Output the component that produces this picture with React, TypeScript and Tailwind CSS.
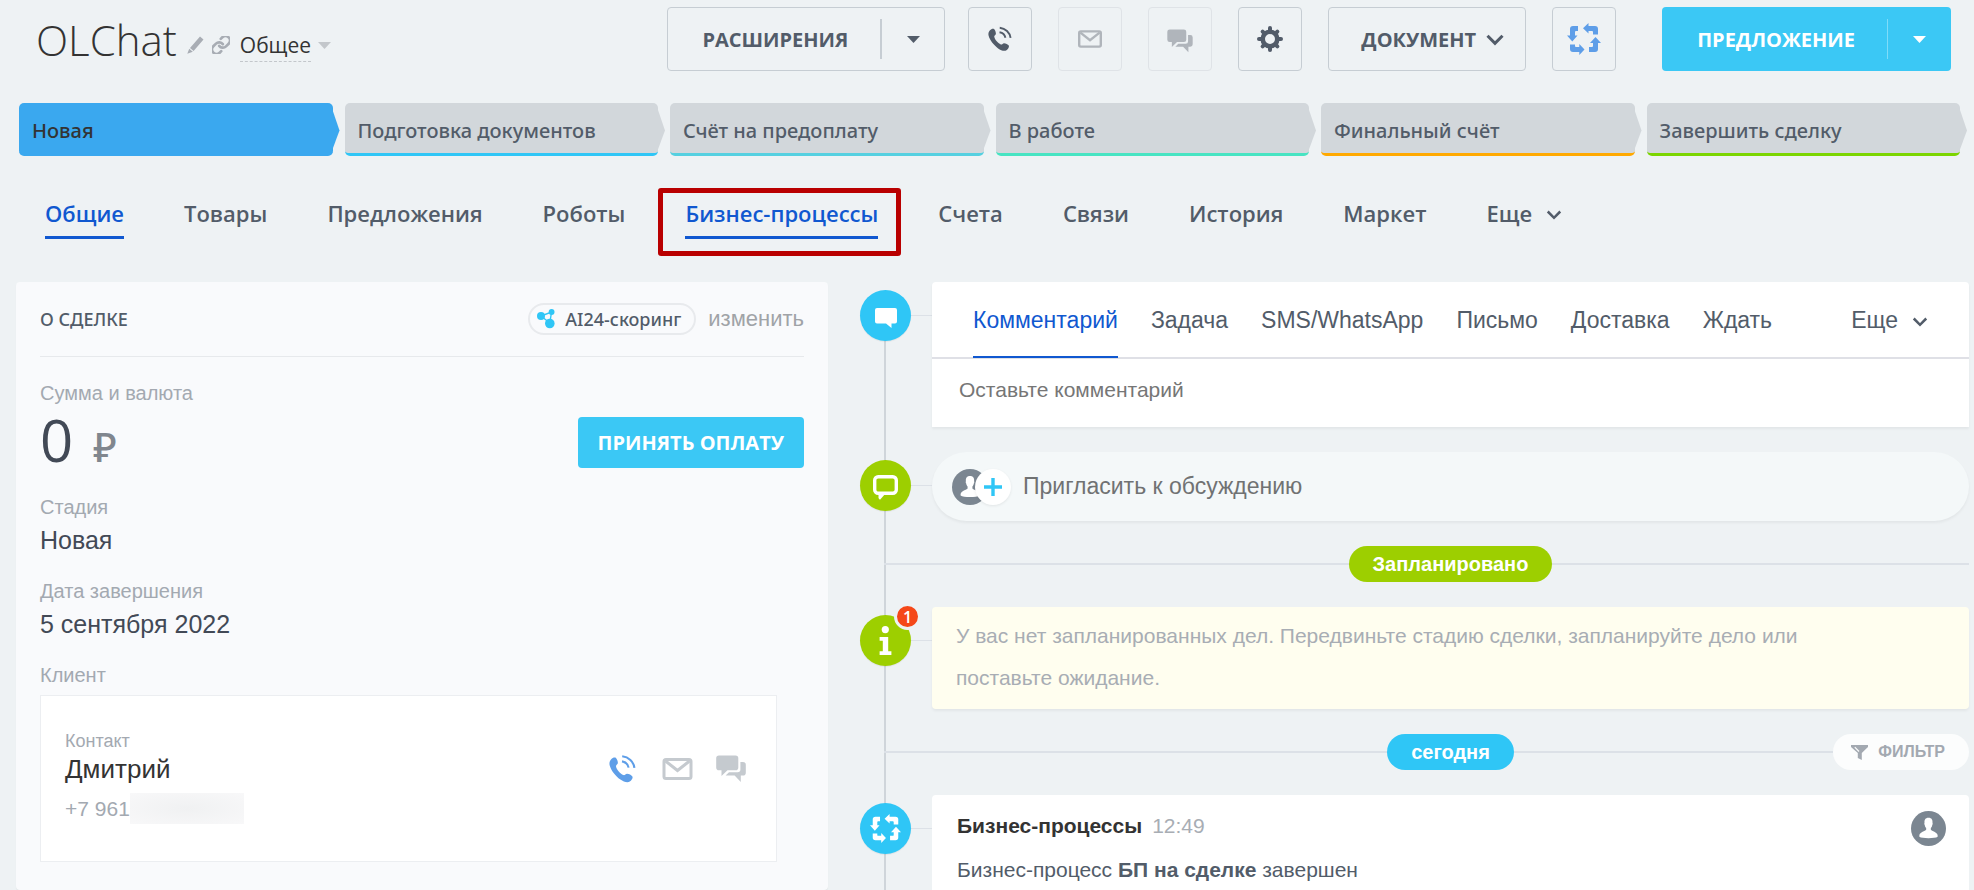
import type { ReactNode } from "react";

type IconProps = { className?: string };

function PhoneIcon({ className }: IconProps) {
  return (
    <svg viewBox="0 0 27 28" className={className} aria-hidden="true">
      <path
        fill="currentColor"
        d="M2.2 4.2C3.6 2.6 5.6 1.9 6.8 2.8C8.2 4.2 8.8 6.2 8.9 8C8.9 9.2 7 10 7 11.2C7.4 14.4 11 18.6 14.4 20.1C15.8 20.6 16.6 18.8 18 18.7C20 18.8 22.4 20 23.4 21.4C24.2 22.8 22.6 25.4 20.8 26.6C18.6 27.9 14.6 27 11.4 24.6C6.4 20.9 2 15.2 0.7 10.4C0.1 8 0.6 5.8 2.2 4.2Z"
      />
      <path d="M13 6.4C16.4 7 19 9.4 19.6 12.6" fill="none" stroke="currentColor" strokeWidth="2.1" />
      <path d="M13.2 1.3C19.6 2 24.6 6.6 25.4 12.8" fill="none" stroke="currentColor" strokeWidth="2.1" />
    </svg>
  );
}

function MailIcon({ className }: IconProps) {
  return (
    <svg viewBox="0 0 30 22" className={className} aria-hidden="true">
      <rect x="1.5" y="1.5" width="27" height="19" rx="2" fill="none" stroke="currentColor" strokeWidth="3" />
      <path d="M3 3L15 12.5L27 3" fill="none" stroke="currentColor" strokeWidth="3" />
    </svg>
  );
}

function ChatsIcon({ className }: IconProps) {
  return (
    <svg viewBox="0 0 30 28" className={className} aria-hidden="true">
      <path
        fill="currentColor"
        d="M3 0.5H19.5A2.8 2.8 0 0 1 22.3 3.3V12.4A2.8 2.8 0 0 1 19.5 15.2H11.5L5.5 21V15.2H3A2.8 2.8 0 0 1 0.2 12.4V3.3A2.8 2.8 0 0 1 3 0.5Z"
      />
      <path
        fill="currentColor"
        d="M24.4 7H27A2.8 2.8 0 0 1 29.8 9.8V17.8A2.8 2.8 0 0 1 27 20.6H24.8V27L18.6 20.6H9.6L13 17.3H21.6A2.8 2.8 0 0 0 24.4 14.5Z"
      />
    </svg>
  );
}

const TEETH = [0, 45, 90, 135, 180, 225, 270, 315];

function GearIcon({ className }: IconProps) {
  return (
    <svg viewBox="0 0 26 26" className={className} aria-hidden="true">
      <circle cx="13" cy="13" r="7.3" fill="none" stroke="currentColor" strokeWidth="4.6" />
      {TEETH.map((a) => (
        <line
          key={a}
          x1="13"
          y1="4"
          x2="13"
          y2={a % 90 === 0 ? "2" : "2.6"}
          stroke="currentColor"
          strokeWidth="4"
          strokeLinecap="round"
          transform={`rotate(${a} 13 13)`}
        />
      ))}
    </svg>
  );
}

function ProcessIcon({ className }: IconProps) {
  return (
    <svg viewBox="0 0 34 32" className={className} fill="currentColor" aria-hidden="true">
      <path d="M11 3V8H9Q8 8 8 9V12.5H10.5L5.3 18.5L0 12.5H3V6Q3 3 6 3Z" />
      <path d="M16 5.3L21.5 0V3H28Q31 3 31 6V11.5H26V9Q26 8 25 8H21.5V10.5Z" />
      <path d="M28.5 14L34 20H31V26Q31 29 28 29H22V24H25Q26 24 26 23V20H23Z" />
      <path d="M17.5 26.5L12.3 32V29H6Q3 29 3 26V21.5H8V23Q8 24 9 24H12.3V21Z" />
    </svg>
  );
}

function PersonIcon({ className }: IconProps) {
  return (
    <svg viewBox="0 0 36 36" className={className} aria-hidden="true">
      <circle cx="18" cy="18" r="18" fill="#7b8691" />
      <path
        fill="#fff"
        d="M18 7C21.3 7 22.4 9.2 22.1 12.2C22.4 12.6 22.4 13.8 21.8 14.6C21.6 16 21 16.8 20.4 17.6V19.4C21.4 20.8 26.8 21.6 27.4 25V26.4C24.6 28.4 11.4 28.4 8.6 26.4V25C9.2 21.6 14.6 20.8 15.6 19.4V17.6C15 16.8 14.4 16 14.2 14.6C13.6 13.8 13.6 12.6 13.9 12.2C13.6 9.2 14.7 7 18 7Z"
      />
    </svg>
  );
}

function Chevron({ className }: IconProps) {
  return (
    <svg viewBox="0 0 18 12" className={className} aria-hidden="true">
      <path d="M1.5 1.8L9 9.4L16.5 1.8" fill="none" stroke="currentColor" strokeWidth="3" />
    </svg>
  );
}

function Caret({ className }: IconProps) {
  return (
    <svg viewBox="0 0 13 7" className={className} aria-hidden="true">
      <path d="M0 0H13L6.5 7Z" fill="currentColor" />
    </svg>
  );
}

const iconButton = "flex h-16 w-16 items-center justify-center rounded-[4px] border";

function Header() {
  return (
    <header className="flex items-start justify-between pl-9 pr-[23px] pt-[7px]">
      <div className="flex items-center pt-[5px]">
        <h1 className="text-[42px] font-light leading-[56px] text-[#333]">OLChat</h1>
        <div className="flex items-center pt-[10px]">
          <button aria-label="Переименовать" className="ml-[10px]">
            <svg viewBox="0 0 17 18" className="h-[18px] w-[17px] text-[#a8adb4]" aria-hidden="true">
              <path d="M13 0.5L16.5 3.5L6.6 15L3 12Z M2.2 12.8L5.8 15.7L0.3 17.8Z" fill="currentColor" />
            </svg>
          </button>
          <button aria-label="Скопировать ссылку" className="ml-2">
            <svg viewBox="2 2 20 20" className="h-[18px] w-[18px] text-[#a8adb4]" fill="none" stroke="currentColor" strokeWidth="3" strokeLinecap="round" aria-hidden="true">
              <path d="M10 13a5 5 0 0 0 7.540.540l3-3a5 5 0 0 0-7.070-7.070l-1.720 1.710" />
              <path d="M14 11a5 5 0 0 0-7.540-.540l-3 3a5 5 0 0 0 7.070 7.070l1.710-1.710" />
            </svg>
          </button>
          <button className="ml-[10px] flex items-center gap-[7px] text-[21px] leading-8 text-[#333]">
            <span className="border-b border-dashed border-[#c3c7cb]">Общее</span>
            <Caret className="h-[7px] w-[13px] text-[#c3c7cb]" />
          </button>
        </div>
      </div>

      <div className="flex text-xl font-bold leading-6 text-[#525c69]">
        <div className="flex h-16 items-center rounded-[4px] border border-[#c6cdd3]">
          <button className="h-full pl-[34px] pr-8 pt-0.5">РАСШИРЕНИЯ</button>
          <span className="h-10 w-0.5 bg-[#c6cdd3]" />
          <button aria-label="Список расширений" className="flex h-full w-[62px] items-center justify-center">
            <Caret className="h-[7px] w-[13px]" />
          </button>
        </div>
        <button aria-label="Позвонить" className={`${iconButton} ml-[23px] border-[#c6cdd3]`}>
          <PhoneIcon className="h-[26px] w-6" />
        </button>
        <button aria-label="Написать письмо" className={`${iconButton} ml-[26px] border-[#dfe3e7] text-[#b0b5bb]`}>
          <MailIcon className="h-[18px] w-6" />
        </button>
        <button aria-label="Открыть чат" className={`${iconButton} ml-[26px] border-[#dfe3e7] text-[#b0b5bb]`}>
          <ChatsIcon className="mt-1 h-6 w-[26px]" />
        </button>
        <button aria-label="Настройки" className={`${iconButton} ml-[26px] border-[#c6cdd3]`}>
          <GearIcon className="h-[26px] w-[26px]" />
        </button>
        <button className="ml-[26px] flex h-16 items-center gap-[10px] rounded-[4px] border border-[#c6cdd3] pl-8 pr-[21px] pt-0.5">
          ДОКУМЕНТ
          <Chevron className="h-3 w-[18px]" />
        </button>
        <button aria-label="Бизнес-процессы" className={`${iconButton} ml-[26px] border-[#c6cdd3] text-[#5e9ee8]`}>
          <ProcessIcon className="h-8 w-[34px]" />
        </button>
        <div className="ml-[46px] flex h-16 items-center rounded-[4px] bg-[#3bc8f5] text-white">
          <button className="h-full pl-[35px] pr-8 pt-0.5">ПРЕДЛОЖЕНИЕ</button>
          <span className="h-10 w-px bg-[#7fdcf9]" />
          <button aria-label="Другие документы" className="flex h-full w-[63px] items-center justify-center">
            <Caret className="h-[7px] w-[13px]" />
          </button>
        </div>
      </div>
    </header>
  );
}

const STAGES = [
  { name: "Новая", body: "bg-[#3aa8ef] border-[#3aa8ef] text-[#333]", tip: "bg-[#3aa8ef]" },
  { name: "Подготовка документов", body: "bg-[#d2d7db] border-[#2fc6f6] text-[#525c69]", tip: "bg-[#d2d7db]" },
  { name: "Счёт на предоплату", body: "bg-[#d2d7db] border-[#55d0e0] text-[#525c69]", tip: "bg-[#d2d7db]" },
  { name: "В работе", body: "bg-[#d2d7db] border-[#47e4c2] text-[#525c69]", tip: "bg-[#d2d7db]" },
  { name: "Финальный счёт", body: "bg-[#d2d7db] border-[#ffa900] text-[#525c69]", tip: "bg-[#d2d7db]" },
  { name: "Завершить сделку", body: "bg-[#d2d7db] border-[#7bd500] text-[#525c69]", tip: "bg-[#d2d7db]" },
];

function Stages() {
  return (
    <div className="mt-8 grid grid-cols-6 gap-[5px] pl-[19px] pr-[7px]">
      {STAGES.map((s) => (
        <button key={s.name} className="flex items-stretch">
          <span className={`flex h-[53px] flex-1 items-center rounded-[5px] border-b-[3px] pl-[13px] pt-[5px] font-['Noto_Sans','Open_Sans',sans-serif] text-xl font-medium leading-7 ${s.body}`}>
            {s.name}
          </span>
          <span className={`-ml-px my-1 w-2 [clip-path:polygon(0_0,100%_52%,0_100%)] ${s.tip}`} />
        </button>
      ))}
    </div>
  );
}

const TABS = [
  { name: "Общие", active: true, marked: false },
  { name: "Товары", active: false, marked: false },
  { name: "Предложения", active: false, marked: false },
  { name: "Роботы", active: false, marked: false },
  { name: "Бизнес-процессы", active: true, marked: true },
  { name: "Счета", active: false, marked: false },
  { name: "Связи", active: false, marked: false },
  { name: "История", active: false, marked: false },
  { name: "Маркет", active: false, marked: false },
];

function Tabs() {
  return (
    <nav className="mt-[41px] flex gap-[60px] pl-[45px] text-[22px] font-semibold leading-8">
      {TABS.map((t) => (
        <a
          key={t.name}
          href="#"
          className={`relative border-b-[3px] pb-[7px] ${t.active ? "border-[#1058d0] text-[#1058d0]" : "border-transparent text-[#525c69]"}`}
        >
          {t.name}
          {t.marked && <span className="absolute -bottom-5 -left-[27px] -right-[23px] -top-[9px] rounded-[3px] border-[5px] border-[#b90000]" />}
        </a>
      ))}
      <button className="flex items-center gap-[14px] pb-[10px] text-[#525c69]">
        Еще
        <Chevron className="mt-1 h-[10px] w-4" />
      </button>
    </nav>
  );
}

function Field({ label, value }: { label: string; value: string }) {
  return (
    <div className="mb-[23px]">
      <dt className="text-xl leading-6 text-[#a3a9b1]">{label}</dt>
      <dd className="mt-[5px] text-[25px] leading-8 text-[#424956]">{value}</dd>
    </div>
  );
}

function DealPanel() {
  return (
    <section className="rounded-sm bg-[#f9fafc] px-6 font-['Liberation_Sans',Arial,sans-serif] shadow-[0_1px_1px_rgba(0,0,0,0.06)]">
      <div className="flex h-[75px] items-center border-b border-[#e7e9ec]">
        <h2 className="font-['Noto_Sans','Open_Sans',sans-serif] text-lg font-medium leading-6 text-[#525c69]">О СДЕЛКЕ</h2>
        <button className="ml-auto flex h-8 items-center gap-[10px] rounded-full border-2 border-[#e8eaed] pl-[7px] pr-[13px] font-['Noto_Sans','Open_Sans',sans-serif] text-lg font-medium leading-6 text-[#525c69]">
          <svg viewBox="0 0 18 20" className="h-5 w-[18px]" fill="#2fc6f6" stroke="none" aria-hidden="true">
            <path d="M4 7L14.5 3L12.8 14Z" fill="none" stroke="#2fc6f6" strokeWidth="1.4" />
            <circle cx="4" cy="7" r="4" />
            <circle cx="14.6" cy="3" r="2.9" />
            <circle cx="12.8" cy="14.5" r="4.8" />
          </svg>
          AI24-скоринг
        </button>
        <button className="ml-3 text-[22px] leading-6 text-[#a0a3a7]">изменить</button>
      </div>

      <p className="mt-6 text-xl leading-6 text-[#a3a9b1]">Сумма и валюта</p>
      <div className="mt-3 flex items-center justify-between">
        <p className="flex h-[51px] items-baseline gap-5 font-['Open_Sans',sans-serif] text-[58px] leading-[46px] text-[#424956]">
          0 <span className="font-['Noto_Sans','Open_Sans',sans-serif] text-[40px] font-medium text-[#80868e]">₽</span>
        </p>
        <button className="h-[51px] rounded-[4px] bg-[#3bc8f5] px-5 font-['Open_Sans',sans-serif] text-xl font-bold text-white">
          ПРИНЯТЬ ОПЛАТУ
        </button>
      </div>

      <dl className="mt-[27px]">
        <Field label="Стадия" value="Новая" />
        <Field label="Дата завершения" value="5 сентября 2022" />
      </dl>
      <p className="text-xl leading-6 text-[#a3a9b1]">Клиент</p>

      <div className="mr-[27px] mt-2 flex items-start justify-between border border-[#eceef1] bg-white px-6 pb-[37px] pt-[33px]">
        <div>
          <p className="text-lg leading-6 text-[#a3a9b1]">Контакт</p>
          <a href="#" className="block text-[26px] leading-8 text-[#333]">Дмитрий</a>
          <p className="mt-2 flex items-center text-[21px] leading-6 text-[#a3a9b1]">
            +7 961
            <span className="h-[31px] w-[114px] bg-radial from-[#f0f1f2] to-[#f8f8f9]" />
          </p>
        </div>
        <div className="mt-[26px] flex items-center gap-[23px] pr-[6px] text-[#c5cacf]">
          <button aria-label="Позвонить контакту" className="text-[#5e9ee8]">
            <PhoneIcon className="h-7 w-[27px]" />
          </button>
          <button aria-label="Письмо контакту" className="ml-[3px]">
            <MailIcon className="h-[22px] w-[31px]" />
          </button>
          <button aria-label="Чат с контактом">
            <ChatsIcon className="h-7 w-[30px]" />
          </button>
        </div>
      </div>
    </section>
  );
}

function Row({ color, icon, children, className = "" }: { color: string; icon: ReactNode; children: ReactNode; className?: string }) {
  return (
    <div className={`relative flex items-start ${className}`}>
      <div className="mt-2 flex h-[51px] items-center">
        <span className={`relative flex h-[51px] w-[51px] items-center justify-center rounded-full text-white shadow-[0_1px_1px_rgba(0,0,0,0.06)] ${color}`}>{icon}</span>
        <span className="h-px w-[21px] bg-[#dce1e7]" />
      </div>
      {children}
    </div>
  );
}

function Divider({ label, color, children }: { label: string; color: string; children?: ReactNode }) {
  return (
    <div className="relative my-[25px] flex h-9 items-center pl-6">
      <span className="h-0.5 w-12 bg-[#dce1e7]" />
      <span className="h-0.5 flex-1 bg-[#dce1e7]" />
      <span className={`flex h-9 items-center rounded-full px-6 text-xl font-bold leading-6 text-white ${color}`}>{label}</span>
      <span className="flex flex-1 items-center">
        <span className="h-0.5 flex-1 bg-[#dce1e7]" />
        {children}
      </span>
    </div>
  );
}

const ACTIONS = ["Комментарий", "Задача", "SMS/WhatsApp", "Письмо", "Доставка", "Ждать"];

const cardShadow = "shadow-[0_2px_3px_rgba(0,0,0,0.05)]";

function Timeline() {
  return (
    <section className="relative flex flex-col font-['Liberation_Sans',Arial,sans-serif]">
      <span className="absolute bottom-0 left-6 top-8 w-0.5 bg-[#cfd5da]" />

      <Row
        color="bg-[#2fc6f6]"
        icon={
          <svg viewBox="0 0 22 20" className="mt-[5px] h-5 w-[22px]" aria-hidden="true">
            <path d="M2 0H20Q22 0 22 2V13.5Q22 15.5 20 15.5H16.5V20L11 15.5H2Q0 15.5 0 13.5V2Q0 0 2 0Z" fill="currentColor" />
          </svg>
        }
      >
        <div className={`flex-1 rounded-t-[4px] bg-white ${cardShadow}`}>
          <div className="flex h-[77px] gap-[33px] border-b-2 border-[#dfe0e6] px-[41px] text-[23px] leading-7 text-[#525c69]">
            {ACTIONS.map((a, i) => (
              <button key={a} className={`-mb-px border-b-2 pt-0.5 ${i === 0 ? "border-[#1058d0] text-[#1058d0]" : "border-transparent"}`}>
                {a}
              </button>
            ))}
            <button className="ml-auto flex items-center gap-[14px]">
              Еще
              <Chevron className="mt-1 h-[10px] w-4" />
            </button>
          </div>
          <input
            aria-label="Комментарий"
            placeholder="Оставьте комментарий"
            className="mb-[6px] block h-[62px] w-full bg-transparent px-[27px] text-[21px] outline-none placeholder:text-[#767676]"
          />
        </div>
      </Row>

      <Row
        className="mt-[25px]"
        color="bg-[#9dcf00]"
        icon={
          <svg viewBox="0 0 25 25" className="mt-1 h-[25px] w-[25px]" aria-hidden="true">
            <rect x="1.7" y="1.7" width="21.6" height="16.6" rx="3.5" fill="none" stroke="currentColor" strokeWidth="3.4" />
            <path d="M5.5 18.5H12.5L7 24.8Q5.5 24 5.5 22.5Z" fill="currentColor" />
          </svg>
        }
      >
        <button className={`flex h-[69px] flex-1 items-center rounded-full bg-[#f4f8f9] pl-5 text-[23px] text-[#707273] ${cardShadow}`}>
          <PersonIcon className="h-9 w-9" />
          <span className="relative -ml-[13px] flex h-9 w-9 items-center justify-center rounded-full bg-white shadow-[0_1px_3px_rgba(0,0,0,0.08)]">
            <svg viewBox="0 0 18 18" className="h-[18px] w-[18px]" aria-hidden="true">
              <path d="M9 0V18M0 9H18" stroke="#2fc6f6" strokeWidth="3.4" />
            </svg>
          </span>
          <span className="ml-3">Пригласить к обсуждению</span>
        </button>
      </Row>

      <Divider label="Запланировано" color="bg-[#9dcf00]" />

      <Row
        color="bg-[#9dcf00]"
        icon={
          <>
            <svg viewBox="0 0 13 29" className="h-[29px] w-[13px]" aria-hidden="true">
              <circle cx="6.3" cy="3.6" r="3.6" fill="currentColor" />
              <path d="M0.6 11H9.2V25.2H12.4V29H0.6V25.2H3.8V14.8H0.6Z" fill="currentColor" />
            </svg>
            <span className="absolute -right-[10px] -top-3 flex h-[27px] w-[27px] items-center justify-center rounded-full border-[3px] border-[#eef2f4] bg-[#f54819] font-['Open_Sans',sans-serif] text-base font-semibold text-white">
              1
            </span>
          </>
        }
      >
        <div className={`flex-1 rounded-[4px] bg-[#fffeef] pb-[10px] pl-6 pr-[150px] pt-2 text-[21px] leading-[42px] text-[#a8adb4] ${cardShadow}`}>
          У вас нет запланированных дел. Передвиньте стадию сделки, запланируйте дело или поставьте ожидание.
        </div>
      </Row>

      <Divider label="сегодня" color="bg-[#2fc6f6]">
        <button className="flex h-9 items-center gap-[10px] rounded-full bg-[#fcfdfd] pl-[18px] pr-6 text-base font-bold text-[#a3a9b1]">
          <svg viewBox="0 0 17 15" className="h-[15px] w-[17px]" aria-hidden="true">
            <path d="M0 0H17V2L10.8 8V15L6.8 13V8L0 2Z" fill="currentColor" />
            <path d="M3.8 2.2L8 6.5" stroke="#fcfdfd" strokeWidth="1.2" />
          </svg>
          ФИЛЬТР
        </button>
      </Divider>

      <Row className="flex-1" color="bg-[#2fc6f6]" icon={<ProcessIcon className="h-[31px] w-[31px]" />}>
        <article className="flex flex-1 items-start justify-between self-stretch rounded-t-[4px] bg-white pl-[25px] pr-[23px] pt-4">
          <div className="text-[21px] leading-[30px]">
            <h3 className="flex gap-[10px]">
              <b className="text-[#333]">Бизнес-процессы</b>
              <time className="text-[#a8adb4]">12:49</time>
            </h3>
            <p className="mt-[14px] text-[#525c69]">
              Бизнес-процесс <b>БП на сделке</b> завершен
            </p>
          </div>
          <PersonIcon className="h-[35px] w-[35px]" />
        </article>
      </Row>
    </section>
  );
}

export default function App() {
  return (
    <div className="flex min-h-screen flex-col bg-[#eef2f4] font-['Open_Sans',sans-serif]">
      <Header />
      <Stages />
      <Tabs />
      <main className="mt-[43px] grid flex-1 grid-cols-[812fr_1109fr] gap-8 pl-4 pr-[5px]">
        <DealPanel />
        <Timeline />
      </main>
    </div>
  );
}
